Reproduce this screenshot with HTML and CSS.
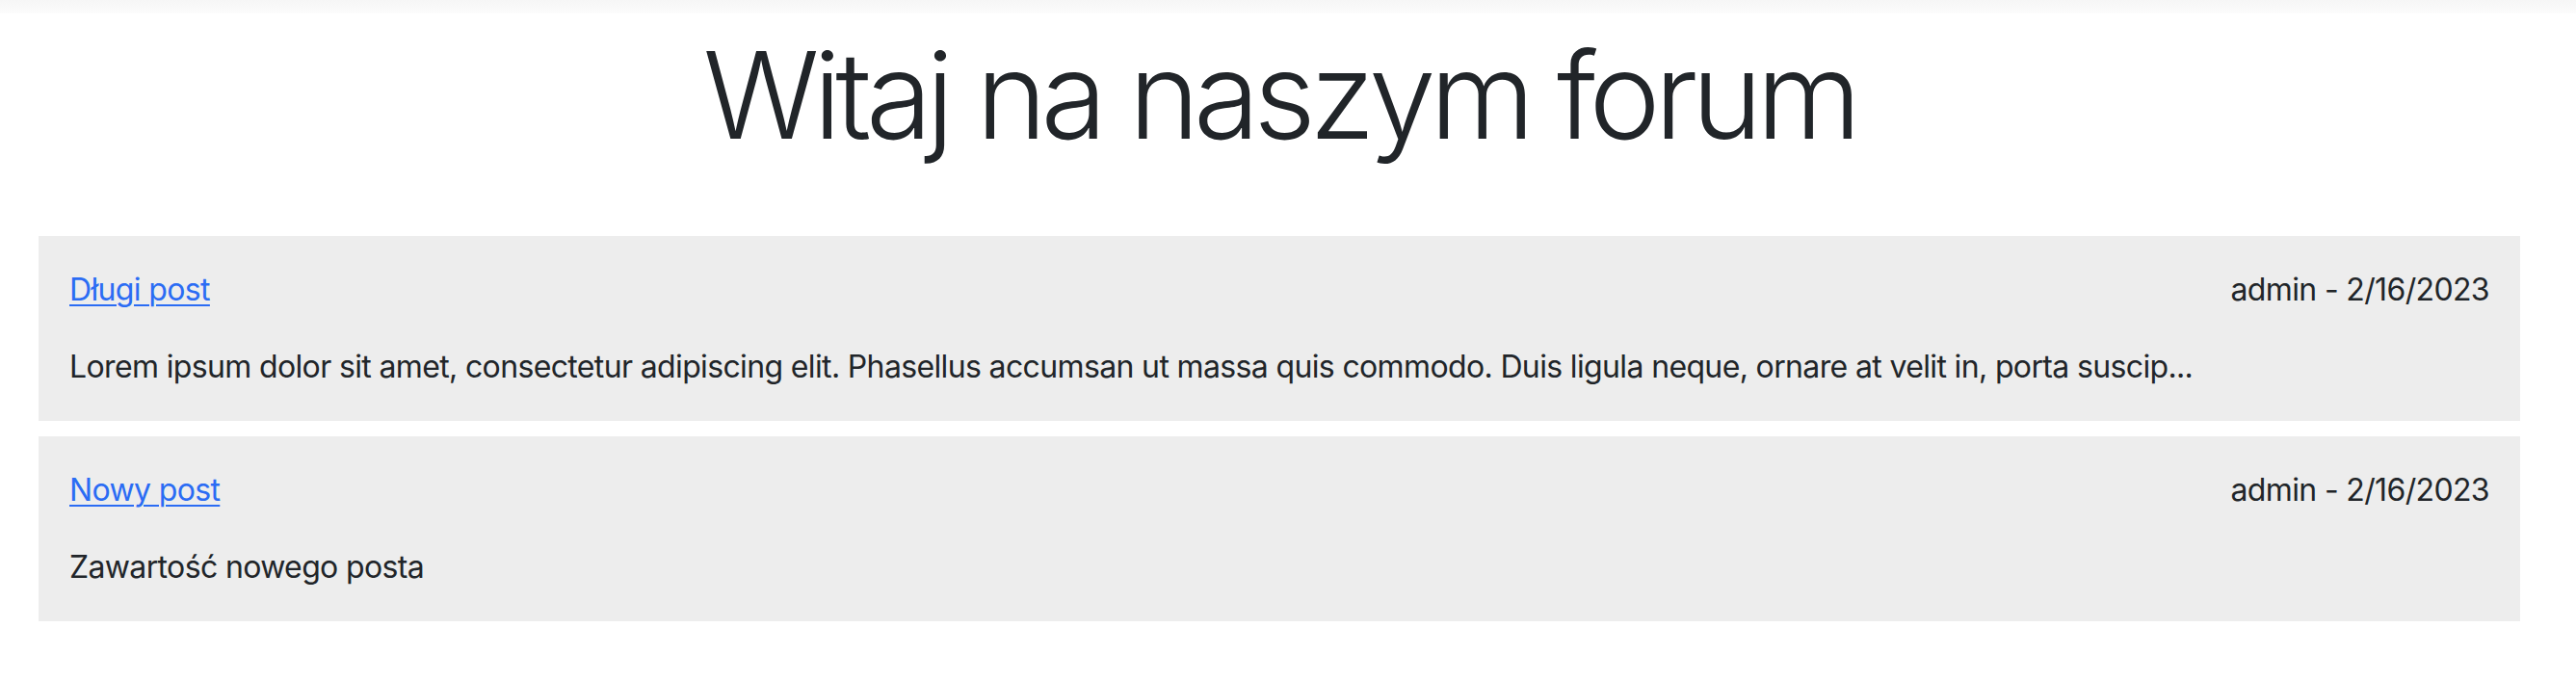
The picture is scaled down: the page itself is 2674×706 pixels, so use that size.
FILE: index.html
```html
<!DOCTYPE html>
<html lang="pl">
<head>
<meta charset="utf-8">
<title>Forum</title>
<link rel="stylesheet" href="styles.css">
</head>
<body>
<div class="topbar"></div>
<main class="container">
  <h1 class="title">Witaj na naszym forum</h1>
  <section class="posts">
    <article class="post">
      <div class="post-head">
        <a href="#" class="post-link">Długi post</a>
        <span class="post-meta">admin - 2/16/2023</span>
      </div>
      <p class="post-body">Lorem ipsum dolor sit amet, consectetur adipiscing elit. Phasellus accumsan ut massa quis commodo. Duis ligula neque, ornare at velit in, porta suscip...</p>
    </article>
    <article class="post">
      <div class="post-head">
        <a href="#" class="post-link">Nowy post</a>
        <span class="post-meta">admin - 2/16/2023</span>
      </div>
      <p class="post-body">Zawartość nowego posta</p>
    </article>
  </section>
</main>
</body>
</html>
```
FILE: styles.css
```css
* { box-sizing: border-box; }
body {
  margin: 0;
  background: #fff;
  color: #212529;
  font-family: Inter, "Noto Sans", sans-serif;
  font-size: 32px;
  line-height: 1.5;
  letter-spacing: -0.64px;
}
.topbar {
  height: 14px;
  background: linear-gradient(#f6f6f6, #fcfcfc);
}
.container {
  width: 2576px;
  margin-left: 40px;
}
.title {
  margin: 10px 0 71px;
  text-align: center;
  font-size: 125px;
  font-weight: 300;
  line-height: 1.2;
  letter-spacing: -6.3px;
}
.posts {
  display: flex;
  flex-direction: column;
  gap: 16px;
}
.post {
  background: #ededed;
  padding: 32px;
}
.post-head {
  display: flex;
  justify-content: space-between;
  align-items: baseline;
  margin-bottom: 32px;
}
.post-link {
  color: #2b6cf4;
  text-decoration: underline;
  text-decoration-thickness: 2px;
  text-underline-offset: 4px;
}
.post-body {
  margin: 0;
}
```
